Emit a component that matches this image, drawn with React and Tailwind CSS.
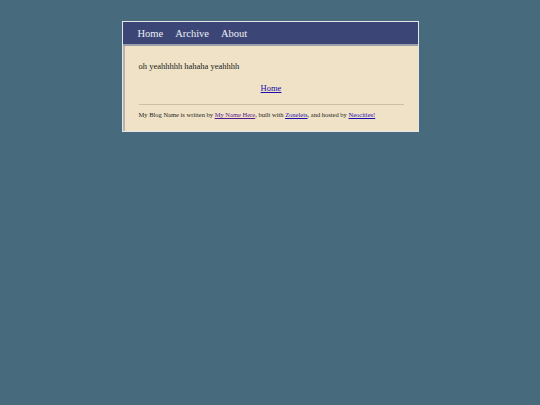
const App = () => {
  return (
    <div className="min-h-[405px] w-full bg-[#476b7c] pt-[21px] font-['Liberation_Serif',serif]">
      <div className="mx-auto w-[297px] border border-[#e6e6e6] bg-[#f0e2c6]">
        {/* Nav */}
        <nav className="flex h-[24px] items-center gap-[12px] border-b-2 border-[#9aa0a8] bg-[#3b4677] pl-[15px] pt-[2px] text-[10.5px] text-[#eeeef4]">
          <a href="#">Home</a>
          <a href="#">Archive</a>
          <a href="#">About</a>
        </nav>

        <main className="border-l-2 border-[#b8b4aa] px-[14px] pb-[11px] pt-[14px] text-[#222]">
          <p className="text-[8.5px] leading-[12px]">oh yeahhhhh hahaha yeahhhh</p>

          <div className="mt-[10px] text-center text-[8.5px] leading-[12px]">
            <a href="#" className="text-[#1a0dab] underline">Home</a>
          </div>

          <hr className="mt-[10px] border-t border-[#cdbfa5]" />

          <p className="mt-[5px] text-[6.5px] leading-[10px]">
            My Blog Name is written by{" "}
            <a href="#" className="text-[#551a8b] underline">My Name Here</a>, built with{" "}
            <a href="#" className="text-[#1a0dab] underline">Zonelets</a>, and hosted by{" "}
            <a href="#" className="text-[#1a0dab] underline">Neocities!</a>
          </p>
        </main>
      </div>
    </div>
  );
};

export default App;
